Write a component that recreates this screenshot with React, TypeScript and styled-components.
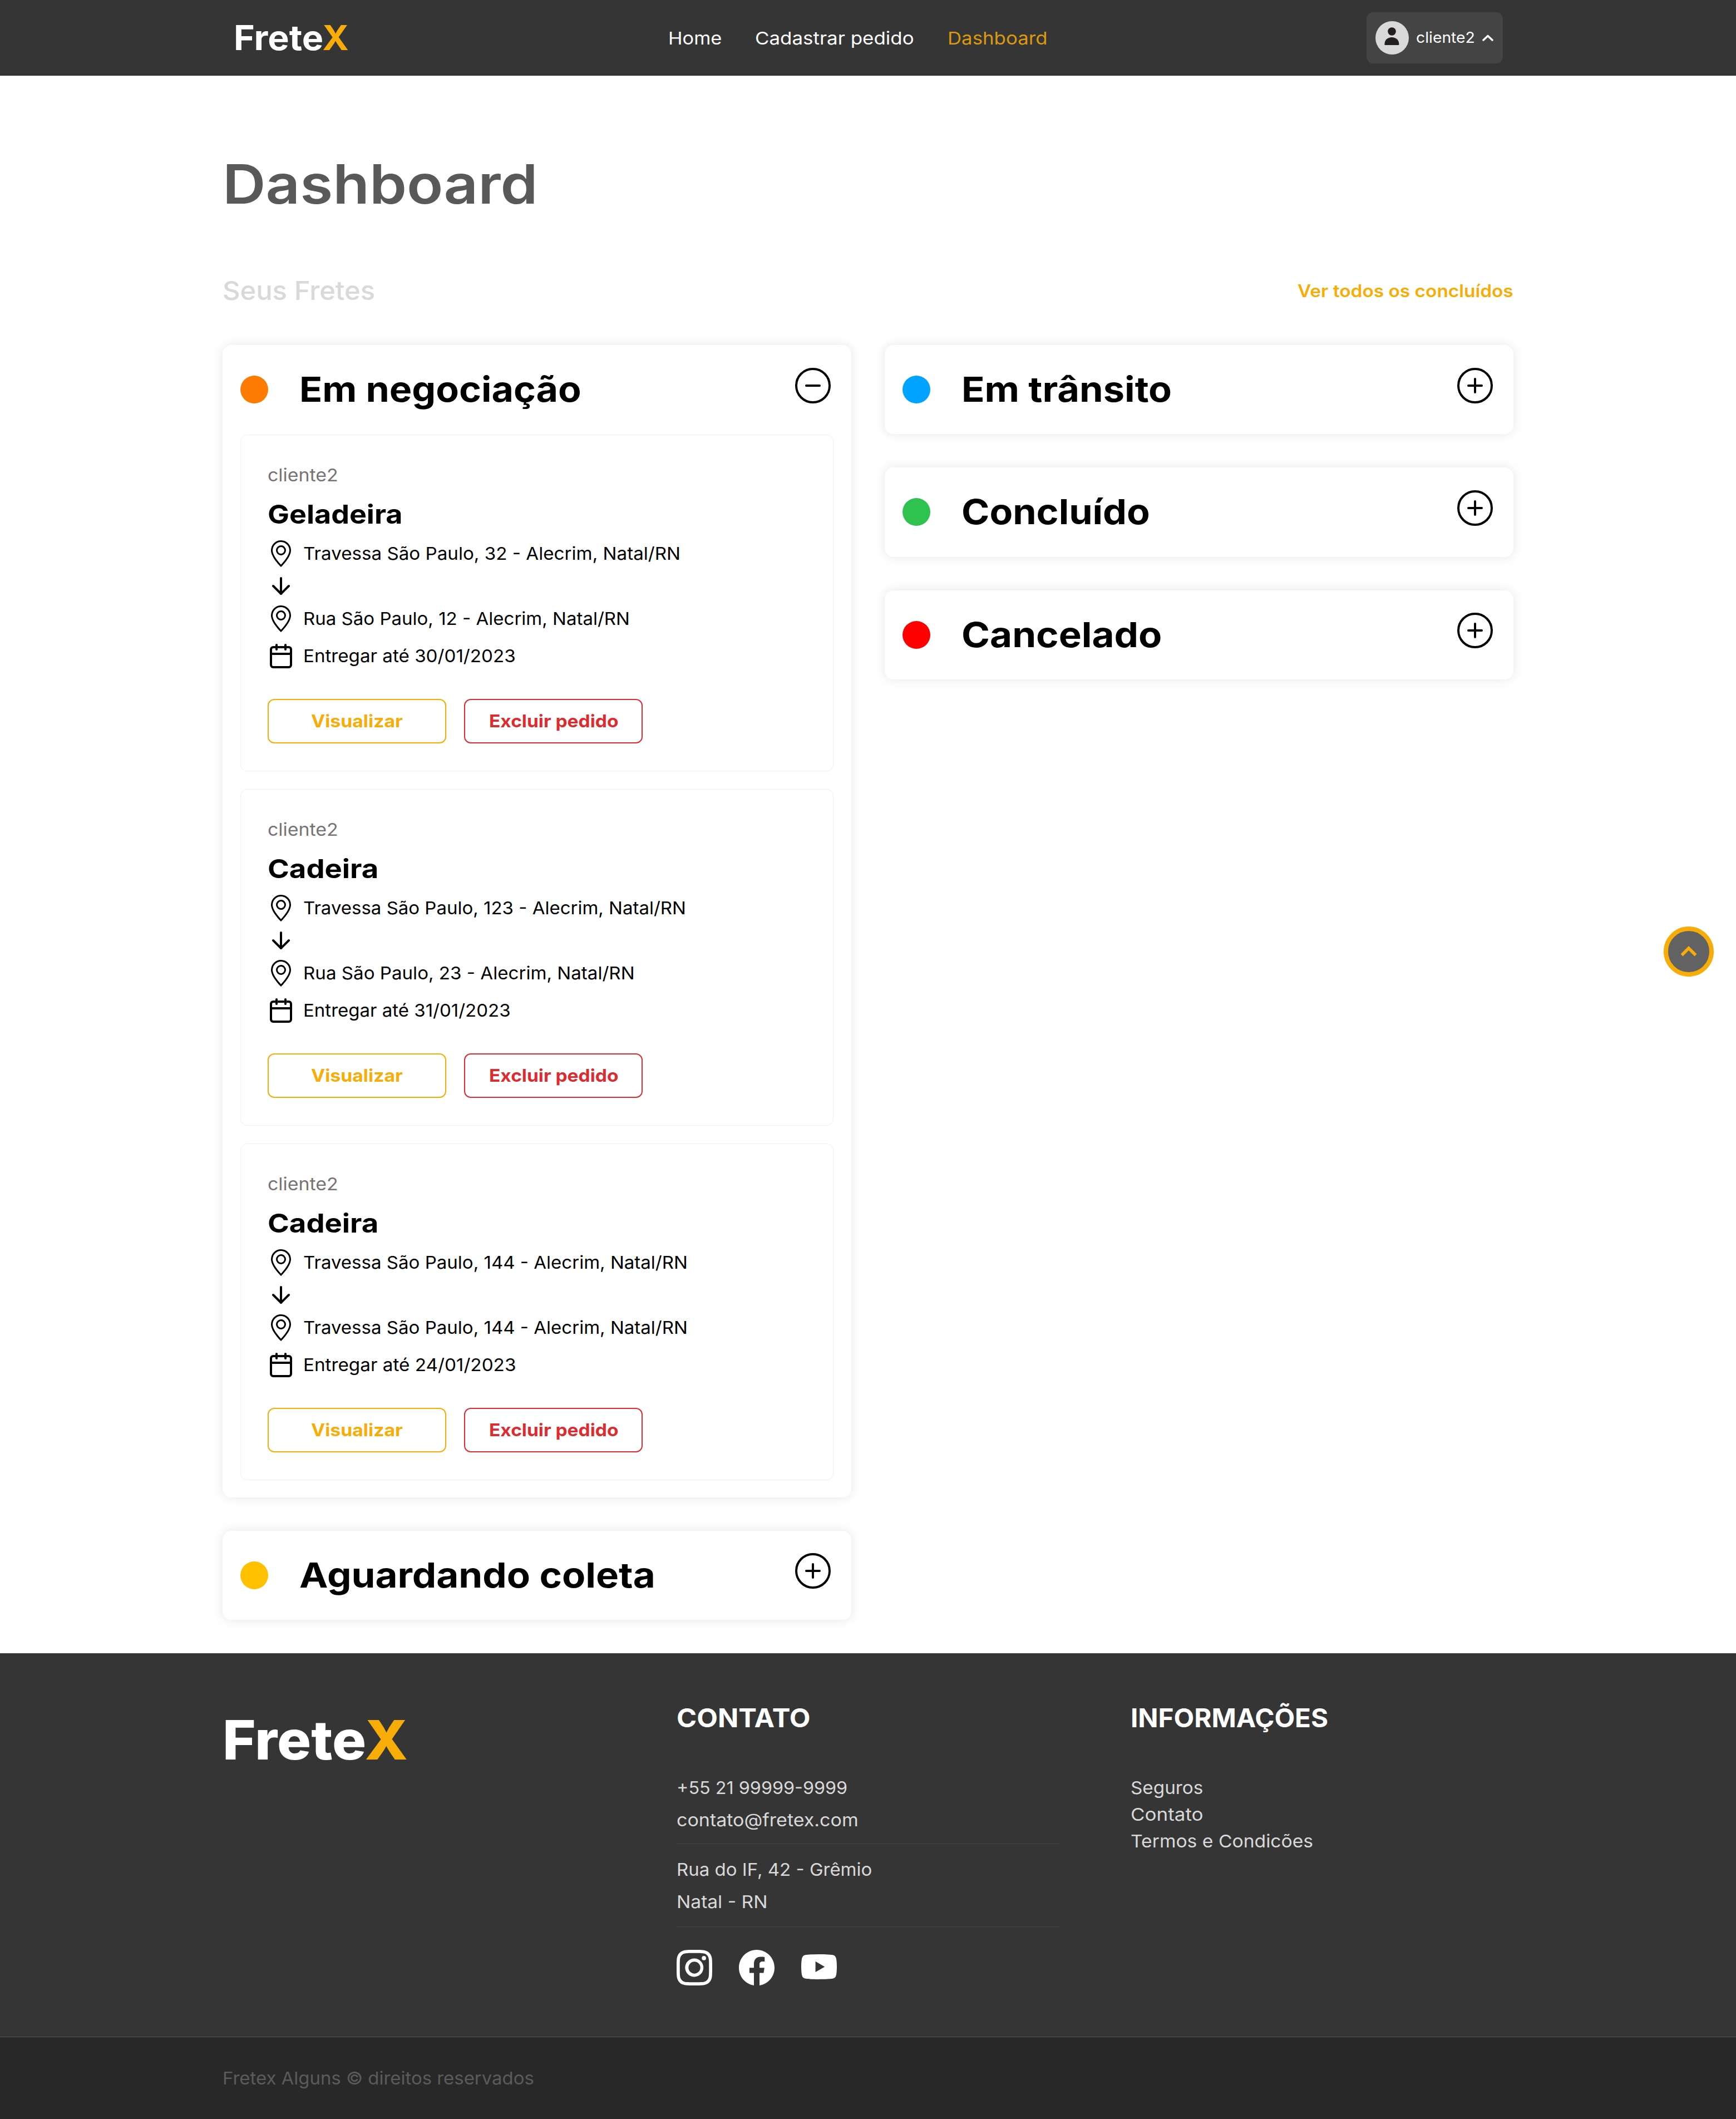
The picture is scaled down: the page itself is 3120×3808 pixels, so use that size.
import React, { useLayoutEffect, useRef, useState } from "react";
import styled, { createGlobalStyle } from "styled-components";
import { BsFacebook, BsGeoAlt, BsInstagram, BsYoutube } from "react-icons/bs";
import { FiArrowDown, FiCalendar } from "react-icons/fi";

const colors = {
  dark: "#353535",
  darker: "#282828",
  brand: "#f8ac08",
  danger: "#dd2c2f",
  muted: "#d9d9d9",
  white: "#ffffff",
};

const GlobalStyle = createGlobalStyle`
  * { box-sizing: border-box; margin: 0; padding: 0; }
  body {
    background: #fff;
    color: #000;
    font-family: Inter, "Open Sans", "Liberation Sans", sans-serif;
    font-size: 31.5px;
    line-height: 48px;
  }
  ul { list-style: none; }
  a { color: inherit; text-decoration: none; }
  button { font: inherit; background: none; border: 0; }
  svg { display: block; flex-shrink: 0; }
`;

const FitBox = styled.span`
  display: block;
  white-space: nowrap;
  text-align: left;
`;

const FitText = styled.span`
  display: inline-block;
  transform-origin: 0 50%;
`;

/* Widens its letters so that the text spans exactly `width` pixels. */
function Fit({ width, children }: { width: number; children: React.ReactNode }) {
  const ref = useRef<HTMLSpanElement>(null);
  const [scale, setScale] = useState(1);
  useLayoutEffect(() => {
    if (ref.current) setScale(width / ref.current.offsetWidth);
  }, [width]);
  return (
    <FitBox style={{ width }}>
      <FitText ref={ref} style={{ transform: `scaleX(${scale})` }}>
        {children}
      </FitText>
    </FitBox>
  );
}

const Header = styled.header`
  display: flex;
  align-items: center;
  justify-content: space-between;
  height: 136px;
  padding: 0 419px 0 420px;
  background: ${colors.dark};
  border-bottom: 1px solid #2d2929;
`;

const Logo = styled.a<{ $large?: boolean }>`
  display: block;
  padding-top: 1px;
  font-size: ${(p) => (p.$large ? 97 : 62)}px;
  line-height: ${(p) => (p.$large ? 150 : 96)}px;
  font-weight: ${(p) => (p.$large ? 800 : 650)};
  color: ${colors.white};
`;

const LogoAccent = styled.span`
  color: ${colors.brand};
`;

const Nav = styled.nav`
  display: flex;
  gap: 60px;
  padding-top: 2px;
`;

const NavLink = styled.a<{ $active?: boolean }>`
  color: ${(p) => (p.$active ? "#dd990e" : colors.white)};
`;

const UserButton = styled.button`
  display: flex;
  align-items: center;
  width: 245px;
  height: 92px;
  padding: 0 16px;
  border-radius: 12px;
  background: #444444;
  color: ${colors.white};
  font-size: 27.5px;
  line-height: 42px;
`;

const UserName = styled.span`
  display: block;
  width: 119px;
  margin: 0 0 1px 13px;
`;

const Main = styled.main`
  padding: 119px 400px 60px;
`;

const PageTitle = styled.h1`
  height: 150px;
  padding-top: 1px;
  font-size: 97px;
  line-height: 150px;
  font-weight: 600;
  color: #595959;
`;

const SubHeader = styled.div`
  display: flex;
  align-items: center;
  justify-content: space-between;
  height: 72px;
  margin: 81px 0 62.2px;
`;

const SubTitle = styled.h2`
  font-size: 47px;
  line-height: 72px;
  font-weight: 500;
  color: ${colors.muted};
`;

const AllLink = styled.a`
  padding-top: 1px;
  color: ${colors.brand};
  font-weight: 600;
`;

const Columns = styled.div`
  display: grid;
  grid-template-columns: 1fr 1fr;
  gap: 60px;
  align-items: start;
`;

const Column = styled.div`
  display: flex;
  flex-direction: column;
  gap: 60px;
`;

const PanelBox = styled.section<{ $open?: boolean }>`
  padding: 0 32px ${(p) => (p.$open ? 31 : 0)}px;
  border-radius: 16px;
  background: #fff;
  box-shadow: 0 0 20px rgba(0, 0, 0, 0.1);
`;

const PanelHeader = styled.div`
  display: flex;
  align-items: center;
  height: 160.2px;
`;

const Dot = styled.span<{ $color: string }>`
  width: 50px;
  height: 50px;
  border-radius: 50%;
  background: ${(p) => p.$color};
`;

const PanelTitle = styled.h3`
  margin: 0 0 2px 56px;
  font-size: 62.5px;
  line-height: 96px;
  font-weight: 750;
`;

const Toggle = styled.button`
  margin: 0 5px 15px auto;
`;

const CardList = styled.div`
  display: flex;
  flex-direction: column;
  gap: 32.2px;
  padding-top: 0.4px;
`;

const Card = styled.article`
  padding: 48px 48px 49px;
  border: 1px solid #f0f0f0;
  border-radius: 12px;
`;

const Client = styled.p`
  color: #787272;
`;

const CardTitle = styled.h4`
  margin: 10px 0 11px;
  font-size: 47px;
  line-height: 72px;
  font-weight: 750;
`;

const InfoRow = styled.div<{ $top?: number }>`
  display: flex;
  align-items: center;
  gap: 16px;
  height: 48px;
  margin-top: ${(p) => p.$top ?? 0}px;
`;

const Actions = styled.div`
  display: flex;
  gap: 32px;
  margin-top: 52.8px;
`;

const Action = styled.button<{ $color: string }>`
  display: flex;
  align-items: center;
  justify-content: center;
  width: 321px;
  height: 80px;
  border: 2px solid ${(p) => p.$color};
  border-radius: 12px;
  color: ${(p) => p.$color};
  font-weight: 700;
`;

const ToTop = styled.button`
  position: fixed;
  top: 1665px;
  right: 40px;
  display: grid;
  place-items: center;
  width: 90px;
  height: 90px;
  border: 8px solid ${colors.brand};
  border-radius: 50%;
  background: #626262;
`;

const FooterMain = styled.div`
  display: grid;
  grid-template-columns: repeat(3, 1fr);
  gap: 128px;
  height: 689.2px;
  padding: 80px 400px 0;
  background: ${colors.dark};
  color: ${colors.muted};
`;

const FooterTitle = styled.h5`
  font-size: 46.5px;
  line-height: 72px;
  font-weight: 650;
  color: ${colors.white};
`;

const ContactGroup = styled.ul<{ $first?: boolean }>`
  margin-top: ${(p) => (p.$first ? 61.5 : 16.5)}px;
  padding-bottom: ${(p) => (p.$first ? 13 : 15)}px;
  border-bottom: 1px solid #484848;
  line-height: 58px;
`;

const InfoLinks = styled.ul`
  margin-top: 66px;
`;

const Line = styled.li`
  display: flex;
`;

const Socials = styled.div`
  display: flex;
  gap: 48px;
  margin-top: 41px;
  color: ${colors.white};
`;

const FooterBar = styled.div`
  display: flex;
  align-items: center;
  height: 148px;
  padding: 1px 400px 0;
  border-top: 1px solid #555555;
  background: ${colors.darker};
  color: #5b5b5b;
`;

function Avatar() {
  return (
    <svg width="60" height="60" viewBox="0 0 60 60">
      <circle cx="30" cy="30" r="30" fill="#d9d9d9" />
      <circle cx="29.5" cy="18.5" r="7.3" fill="#231f20" />
      <path d="M16.5 43V40.5C16.5 34 22 29 29.4 29S42.3 34 42.3 40.5V43Z" fill="#231f20" />
    </svg>
  );
}

function ToggleIcon({ open }: { open?: boolean }) {
  return (
    <svg width="64" height="64" viewBox="0 0 64 64" fill="none" stroke="#000" strokeWidth="4" strokeLinecap="round">
      <circle cx="32" cy="32" r="30" />
      <path d={open ? "M20 32H44" : "M20 32H44M32 20V44"} />
    </svg>
  );
}

interface Order {
  title: string;
  titleWidth: number;
  from: string;
  fromWidth: number;
  to: string;
  toWidth: number;
  due: string;
  dueWidth: number;
}

const orders: Order[] = [
  {
    title: "Geladeira", titleWidth: 242,
    from: "Travessa São Paulo, 32 - Alecrim, Natal/RN", fromWidth: 678,
    to: "Rua São Paulo, 12 - Alecrim, Natal/RN", toWidth: 587,
    due: "30/01/2023", dueWidth: 382,
  },
  {
    title: "Cadeira", titleWidth: 199,
    from: "Travessa São Paulo, 123 - Alecrim, Natal/RN", fromWidth: 688,
    to: "Rua São Paulo, 23 - Alecrim, Natal/RN", toWidth: 596,
    due: "31/01/2023", dueWidth: 373,
  },
  {
    title: "Cadeira", titleWidth: 199,
    from: "Travessa São Paulo, 144 - Alecrim, Natal/RN", fromWidth: 691,
    to: "Travessa São Paulo, 144 - Alecrim, Natal/RN", toWidth: 691,
    due: "24/01/2023", dueWidth: 382,
  },
];

function OrderCard({ order }: { order: Order }) {
  return (
    <Card>
      <Client><Fit width={127}>cliente2</Fit></Client>
      <CardTitle><Fit width={order.titleWidth}>{order.title}</Fit></CardTitle>
      <InfoRow>
        <BsGeoAlt size={48} />
        <Fit width={order.fromWidth}>{order.from}</Fit>
      </InfoRow>
      <InfoRow $top={10}>
        <FiArrowDown size={48} />
      </InfoRow>
      <InfoRow $top={11}>
        <BsGeoAlt size={48} />
        <Fit width={order.toWidth}>{order.to}</Fit>
      </InfoRow>
      <InfoRow $top={19}>
        <FiCalendar size={48} />
        <Fit width={order.dueWidth}>{`Entregar até ${order.due}`}</Fit>
      </InfoRow>
      <Actions>
        <Action $color={colors.brand}><Fit width={165}>Visualizar</Fit></Action>
        <Action $color={colors.danger}><Fit width={232}>Excluir pedido</Fit></Action>
      </Actions>
    </Card>
  );
}

interface PanelProps {
  color: string;
  title: string;
  width: number;
  children?: React.ReactNode;
}

function Panel({ color, title, width, children }: PanelProps) {
  const open = Boolean(children);
  return (
    <PanelBox $open={open}>
      <PanelHeader>
        <Dot $color={color} />
        <PanelTitle><Fit width={width}>{title}</Fit></PanelTitle>
        <Toggle><ToggleIcon open={open} /></Toggle>
      </PanelHeader>
      {children}
    </PanelBox>
  );
}

export default function App() {
  return (
    <>
      <GlobalStyle />
      <Header>
        <Logo><Fit width={207}>Frete<LogoAccent>X</LogoAccent></Fit></Logo>
        <Nav>
          <NavLink><Fit width={96}>Home</Fit></NavLink>
          <NavLink><Fit width={286}>Cadastrar pedido</Fit></NavLink>
          <NavLink $active><Fit width={179}>Dashboard</Fit></NavLink>
        </Nav>
        <UserButton>
          <Avatar />
          <UserName><Fit width={106}>cliente2</Fit></UserName>
          <svg width="20" height="12" viewBox="0 0 20 12" fill="none" stroke="#fff" strokeWidth="3.6" strokeLinecap="round" strokeLinejoin="round">
            <path d="M2 10L10 2.5L18 10" />
          </svg>
        </UserButton>
      </Header>

      <Main>
        <PageTitle><Fit width={567}>Dashboard</Fit></PageTitle>
        <SubHeader>
          <SubTitle><Fit width={274}>Seus Fretes</Fit></SubTitle>
          <AllLink><Fit width={388}>Ver todos os concluídos</Fit></AllLink>
        </SubHeader>
        <Columns>
          <Column>
            <Panel color="#ff7a00" title="Em negociação" width={507}>
              <CardList>
                {orders.map((order, i) => (
                  <OrderCard key={i} order={order} />
                ))}
              </CardList>
            </Panel>
            <Panel color="#ffc000" title="Aguardando coleta" width={640} />
          </Column>
          <Column>
            <Panel color="#00a3ff" title="Em trânsito" width={378} />
            <Panel color="#2fc24f" title="Concluído" width={339} />
            <Panel color="#ff0000" title="Cancelado" width={360} />
          </Column>
        </Columns>
      </Main>

      <ToTop>
        <svg width="32" height="20" viewBox="0 0 32 20" fill="none" stroke={colors.brand} strokeWidth="5.6">
          <path d="M3.5 16.5L16 4L28.5 16.5" />
        </svg>
      </ToTop>

      <footer>
        <FooterMain>
          <Logo $large><Fit width={333}>Frete<LogoAccent>X</LogoAccent></Fit></Logo>
          <div>
            <FooterTitle><Fit width={241}>CONTATO</Fit></FooterTitle>
            <ContactGroup $first>
              <Line><Fit width={307}>+55 21 99999-9999</Fit></Line>
              <Line><Fit width={327}>contato@fretex.com</Fit></Line>
            </ContactGroup>
            <ContactGroup>
              <Line><Fit width={351}>Rua do IF, 42 - Grêmio</Fit></Line>
              <Line><Fit width={163}>Natal - RN</Fit></Line>
            </ContactGroup>
            <Socials>
              <BsInstagram size={64} />
              <BsFacebook size={64} />
              <BsYoutube size={64} />
            </Socials>
          </div>
          <div>
            <FooterTitle><Fit width={355}>INFORMAÇÕES</Fit></FooterTitle>
            <InfoLinks>
              <Line><Fit width={130}>Seguros</Fit></Line>
              <Line><Fit width={131}>Contato</Fit></Line>
              <Line><Fit width={328}>Termos e Condicões</Fit></Line>
            </InfoLinks>
          </div>
        </FooterMain>
        <FooterBar><Fit width={560}>Fretex Alguns © direitos reservados</Fit></FooterBar>
      </footer>
    </>
  );
}
